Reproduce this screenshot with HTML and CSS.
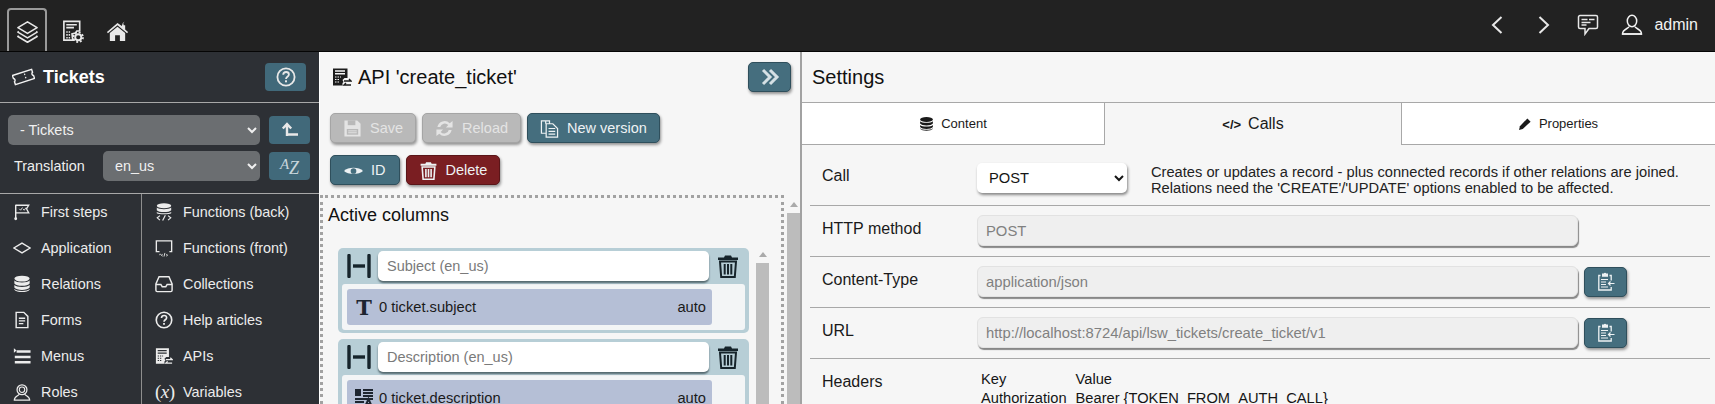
FILE: index.html
```html
<!DOCTYPE html>
<html lang="en">
<head>
<meta charset="utf-8">
<title>API create_ticket</title>
<link rel="stylesheet" href="styles.css">
</head>
<body>
<svg class="defs" width="0" height="0" aria-hidden="true">
  <symbol id="i-db" viewBox="0 0 20 20"><ellipse cx="10" cy="4" rx="8.5" ry="3.2" fill="currentColor"/><path d="M1.5 6.2c2 2.8 15 2.8 17 0v3.2c-2 3.4-15 3.4-17 0zM1.5 11.2c2 2.8 15 2.8 17 0v2.8c-2 3.4-15 3.4-17 0zM1.5 15.6c2 2.8 15 2.8 17 0v.8c-2 3.4-15 3.4-17 0z" fill="currentColor"/></symbol>
  <symbol id="i-help" viewBox="0 0 20 20"><circle cx="10" cy="10" r="8.6" fill="none" stroke="currentColor" stroke-width="1.8"/><path d="M7.2 7.8C7.3 5.9 8.5 5 10.1 5c1.700 0 2.800 1 2.800 2.400 0 2.300-2.900 2.300-2.900 4.500" fill="none" stroke="currentColor" stroke-width="1.800"/><rect x="9" y="13.300" width="2" height="2" fill="currentColor"/></symbol>
  <symbol id="i-api" viewBox="0 0 20 20"><path d="M1 1.500h14.500v9.500h-3l-2 2 1 2 -1 1v2.500H1z" fill="currentColor"/><path d="M3 4h10M3 6.800h10" stroke="var(--icon-bg,#2d3035)" stroke-width="1.500"/><path d="M3 10h6M3 12.500h5M3 15h5" stroke="var(--icon-bg,#2d3035)" stroke-width="1.200" stroke-dasharray="1.500 1"/><path d="M12 13.500h7l-2-2M19 17.500h-7l2-2" transform="translate(0 .5)" fill="none" stroke="currentColor" stroke-width="1.400"/></symbol>
  <symbol id="i-trash" viewBox="0 0 22 24"><path d="M8 1.500h6l1 2h6v2.500H1V3.500h6z" fill="currentColor"/><path d="M3 7.500h16l-1.200 15.500H4.200zM7.700 10v10.500M11 10v10.500M14.300 10v10.500" fill="none" stroke="currentColor" stroke-width="2"/></symbol>
  <symbol id="i-handle" viewBox="0 0 24 24"><path d="M2 1.500v21M22 1.500v21" stroke="currentColor" stroke-width="3.400" stroke-linecap="round"/><path d="M6 12h12" stroke="currentColor" stroke-width="3.400"/></symbol>
  <symbol id="i-clip" viewBox="0 0 20 20"><path d="M13.500 3.500h1.700v5M15.200 15v3H2.800V3.500h1.700" fill="none" stroke="currentColor" stroke-width="1.300"/><path d="M6 1.500h1.800a1.300 1.300 0 0 1 2.400 0H12v3.200H6z" fill="currentColor"/><path d="M5 7.500h7M5 10h5M5 12.500h5M5 15h7M18.500 11.500h-6M14.500 9.500l-2 2 2 2" fill="none" stroke="currentColor" stroke-width="1.200"/></symbol>
</svg>

<header class="topbar">
  <nav class="topbar-left">
    <a class="top-tab top-tab-active"><svg class="ico-24" viewBox="0 0 24 24" fill="none" stroke="currentColor" stroke-width="1.700" stroke-linejoin="round"><path d="M12 2l10 6-10 6-10-6z"/><path d="M3 12l-1 .7 10 6 10-6-1-.7M3 16.500l-1 .7 10 6 10-6-1-.7"/></svg></a>
    <a class="top-tab"><svg class="ico-24" viewBox="0 0 24 24"><path d="M3 1.500h16.500v10h-3l-1.500 2-3.500 1 .5 4.500 1 2H3z" fill="none" stroke="currentColor" stroke-width="1.700"/><path d="M5.500 5h11M5.500 8h8" stroke="currentColor" stroke-width="1.700"/><path d="M5.500 12.500h5M5.500 15.500h5M5.500 18.500h5" stroke="currentColor" stroke-width="1.700" stroke-dasharray="1.500 1"/><circle cx="18" cy="18" r="3.200" fill="none" stroke="currentColor" stroke-width="2"/><circle cx="18" cy="18" r="5" fill="none" stroke="currentColor" stroke-width="1.800" stroke-dasharray="2 1.900"/></svg></a>
    <a class="top-tab"><svg class="ico-24" viewBox="0 0 24 24"><path d="M12 3L1 12.500l1 1.200L12 5.500l10 8.200 1-1.200-3-2.600V5.500h-1.500L18 3.500l1.500-2-2 1.500-1 3.200z" fill="currentColor"/><path d="M12 7l-8 6.500V22h5.500v-6h5v6H20v-8.500z" fill="currentColor"/></svg></a>
  </nav>
  <div class="topbar-right">
    <svg class="ico-nav" viewBox="0 0 14 20"><path d="M11.500 2L3 10l8.500 8" fill="none" stroke="currentColor" stroke-width="2"/></svg>
    <svg class="ico-nav ico-nav-next" viewBox="0 0 14 20"><path d="M2.500 2L11 10l-8.500 8" fill="none" stroke="currentColor" stroke-width="2"/></svg>
    <svg class="ico-chat" viewBox="0 0 22 22"><path d="M3 1.500h16a1.500 1.500 0 0 1 1.500 1.500v10a1.500 1.500 0 0 1-1.500 1.500h-7l-4 5.500v-5.500H3A1.500 1.500 0 0 1 1.500 13V3A1.500 1.500 0 0 1 3 1.500z" fill="none" stroke="currentColor" stroke-width="1.500"/><path d="M4.500 5.500h6M12 5.500h5.500M4.500 8.500h9M4.500 11h5" stroke="currentColor" stroke-width="1.500"/></svg>
    <div class="user">
      <svg class="ico-user" viewBox="0 0 22 22"><ellipse cx="11" cy="7" rx="4.700" ry="5.700" fill="none" stroke="currentColor" stroke-width="1.500"/><path d="M8 12.500c0 2-6.500 2.500-6.500 7.500h19c0-5-6.500-5.500-6.500-7.500" fill="none" stroke="currentColor" stroke-width="1.500"/><path d="M1 20h20" stroke="currentColor" stroke-width="1.500"/></svg>
      <span>admin</span>
    </div>
  </div>
</header>

<main class="layout">
  <aside class="sidebar">
    <div class="side-head">
      <svg class="ico-ticket" viewBox="0 0 24 18"><g transform="rotate(-18 12 9)"><path d="M1.500 4h21v3.200a2 2 0 0 0 0 3.600V14h-21v-3.200a2 2 0 0 0 0-3.600z" fill="none" stroke="currentColor" stroke-width="1.500"/><path d="M14 6v1.500M14 9.500v1.500" stroke="currentColor" stroke-width="1.300"/></g></svg>
      <h1 class="side-title">Tickets</h1>
      <button class="side-btn side-btn-help"><svg class="ico-20"><use href="#i-help"/></svg></button>
    </div>
    <div class="side-filters">
      <div class="filter-row">
        <select class="side-select side-select-full"><option>- Tickets</option></select>
        <button class="side-btn"><svg class="ico-20" viewBox="0 0 20 20"><path d="M7 16V4.500M2.800 8.500L7 4l4.200 4.500M7 14.500h11" fill="none" stroke="currentColor" stroke-width="2.400"/></svg></button>
      </div>
      <div class="filter-row">
        <label class="filter-label">Translation</label>
        <select class="side-select side-select-lang"><option>en_us</option></select>
        <button class="side-btn side-btn-az"><span class="az-a">A</span><span class="az-z">Z</span></button>
      </div>
    </div>
    <nav class="side-menu">
      <a class="menu-item"><svg class="ico-menu" viewBox="0 0 20 20"><path d="M3 2v15" stroke="currentColor" stroke-width="1.600"/><circle cx="3" cy="17.500" r="1.600" fill="currentColor"/><path d="M3 2.500h14.500l-2.500 4 2.500 4.500H3" fill="none" stroke="currentColor" stroke-width="1.400"/><path d="M7 6.500l1.500 1.500 2-3M11 6.500l1.500 1.500 2-3" fill="none" stroke="currentColor" stroke-width="1"/></svg><span>First steps</span></a>
      <a class="menu-item"><svg class="ico-menu" viewBox="0 0 20 20"><ellipse cx="10" cy="3" rx="8" ry="2.800" fill="currentColor"/><path d="M2 5c2 2.500 14 2.500 16 0v3c-2 2.800-14 2.800-16 0zM2 10c1.500 1.800 14.500 1.800 16 0v1.500c-2 1.500-14 1.500-16 0z" fill="currentColor"/><path d="M5.500 14l-3 2.500 3 2.500M14.500 14l3 2.500-3 2.500M11.500 13.500l-3 6M2 17.500" fill="none" stroke="currentColor" stroke-width="1.300"/></svg><span>Functions (back)</span></a>
      <a class="menu-item"><svg class="ico-menu" viewBox="0 0 20 20"><path d="M10 4.500l9 5.500-9 5.500L1 10z" fill="none" stroke="currentColor" stroke-width="1.500"/></svg><span>Application</span></a>
      <a class="menu-item"><svg class="ico-menu" viewBox="0 0 20 20"><path d="M1.500 2h17v12h-17zM5 17.500h10" fill="none" stroke="currentColor" stroke-width="1.500"/><rect x="5" y="13" width="11" height="6" fill="#2d3035"/><path d="M5 17h1.500M8.500 17l-1.500 1 1.500 1M11 15.500l-1 4M12.500 17l1.500 1-1.500 1" fill="none" stroke="currentColor" stroke-width="1"/></svg><span>Functions (front)</span></a>
      <a class="menu-item"><svg class="ico-menu"><use href="#i-db"/></svg><span>Relations</span></a>
      <a class="menu-item"><svg class="ico-menu" viewBox="0 0 20 20"><path d="M4.500 2h11l3.500 8v7a1.500 1.500 0 0 1-1.500 1.500h-15A1.500 1.500 0 0 1 1 17v-7z" fill="none" stroke="currentColor" stroke-width="1.600"/><path d="M1 10.500h5.500l1.500 2.500h4l1.500-2.500H19" fill="none" stroke="currentColor" stroke-width="1.600"/></svg><span>Collections</span></a>
      <a class="menu-item"><svg class="ico-menu" viewBox="0 0 20 20"><path d="M3.500 1.500h8.500l4.500 4.500v12.500h-13z" fill="none" stroke="currentColor" stroke-width="1.600"/><path d="M6.500 8h7M6.500 11h7M6.500 14h5" stroke="currentColor" stroke-width="1.500"/></svg><span>Forms</span></a>
      <a class="menu-item"><svg class="ico-menu"><use href="#i-help"/></svg><span>Help articles</span></a>
      <a class="menu-item"><svg class="ico-menu" viewBox="0 0 20 20"><path d="M1 1.500l3 2.500-3 2.500z" fill="currentColor"/><path d="M4 5h15.500M2 11h17.500M2 17h17.500" stroke="currentColor" stroke-width="2.800"/></svg><span>Menus</span></a>
      <a class="menu-item"><svg class="ico-menu ico-api-side"><use href="#i-api"/></svg><span>APIs</span></a>
      <a class="menu-item"><svg class="ico-menu" viewBox="0 0 20 20"><circle cx="10" cy="7.500" r="5.500" fill="none" stroke="currentColor" stroke-width="1.400"/><circle cx="10" cy="7.500" r="3" fill="none" stroke="currentColor" stroke-width="1.200"/><path d="M7 12.500c-1 2-5.500 2-5.500 6.500h17c0-4.500-4.500-4.500-5.500-6.500" fill="none" stroke="currentColor" stroke-width="1.400"/></svg><span>Roles</span></a>
      <a class="menu-item"><span class="var-glyph">(<i>x</i>)</span><span>Variables</span></a>
    </nav>
  </aside>

  <section class="center">
    <div class="center-head">
      <div class="title-row">
        <svg class="ico-title"><use href="#i-api"/></svg>
        <h2 class="title">API 'create_ticket'</h2>
        <button class="btn btn-expand"><svg class="ico-expand" viewBox="0 0 20 20"><path d="M3 3l7 7-7 7M10 3l7 7-7 7" fill="none" stroke="currentColor" stroke-width="3"/></svg></button>
      </div>
      <div class="btn-row">
        <button class="btn btn-off"><svg class="ico-btn" viewBox="0 0 20 20"><path d="M1.500 1.500H15l3.500 3.500v13.500h-17z" fill="currentColor"/><rect x="5" y="1.500" width="8" height="5" fill="#b9b9b9"/><rect x="4" y="10.500" width="12" height="6" fill="#b9b9b9"/><path d="M5.500 12.500h9M5.500 14.500h9" stroke="currentColor"/></svg>Save</button>
        <button class="btn btn-off"><svg class="ico-btn" viewBox="0 0 20 20"><path d="M2.500 8.500A7.700 7.700 0 0 1 15.500 4.500L18.500 2v7h-7l2.500-2.700A5 5 0 0 0 5.500 8.500zM17.500 11.500A7.700 7.700 0 0 1 4.500 15.500L1.500 18v-7h7L6 13.700a5 5 0 0 0 8.500-2.200z" fill="currentColor"/></svg>Reload</button>
        <button class="btn"><svg class="ico-btn" viewBox="0 0 20 20"><path d="M6 5V2H1.500v13H6M6 2h4v3M6.500 5h7l5 5v9h-12zM9 10h7M9 13h7M9 16h7" fill="none" stroke="currentColor" stroke-width="1.300"/></svg>New version</button>
      </div>
      <div class="btn-row">
        <button class="btn btn-id"><svg class="ico-btn" viewBox="0 0 20 20"><path d="M0 10.500C4 6 16 6 20 10.500 16 14.500 4 14.500 0 10.500z" fill="currentColor"/><circle cx="10" cy="10.500" r="3" fill="#456e7e"/></svg>ID</button>
        <button class="btn btn-danger"><svg class="ico-btn"><use href="#i-trash"/></svg>Delete</button>
      </div>
    </div>
    <div class="builder">
      <div class="dotted">
        <h3 class="builder-title">Active columns</h3>
        <div class="builder-body">
          <div class="cards">
            <article class="card">
              <div class="card-head">
                <svg class="ico-handle"><use href="#i-handle"/></svg>
                <input class="card-input" placeholder="Subject (en_us)">
                <svg class="ico-trash"><use href="#i-trash"/></svg>
              </div>
              <div class="card-panel">
                <div class="card-bar">
                  <span class="t-glyph">T</span>
                  <span class="bar-name">0 ticket.subject</span>
                  <span class="bar-auto">auto</span>
                </div>
              </div>
            </article>
            <article class="card">
              <div class="card-head">
                <svg class="ico-handle"><use href="#i-handle"/></svg>
                <input class="card-input" placeholder="Description (en_us)">
                <svg class="ico-trash"><use href="#i-trash"/></svg>
              </div>
              <div class="card-panel">
                <div class="card-bar">
                  <svg class="ico-rich" viewBox="0 0 20 20"><path d="M1 1h6v7H1z" fill="currentColor"/><path d="M9 2h10M9 5h10M9 8h10M1 11h18M1 14h9M1 17h8" stroke="currentColor" stroke-width="1.800"/><path d="M11 19l3.500-8 3.500 8M12.500 16h4" fill="none" stroke="currentColor" stroke-width="2"/></svg>
                  <span class="bar-name">0 ticket.description</span>
                  <span class="bar-auto">auto</span>
                </div>
              </div>
            </article>
          </div>
          <div class="scrollbar scrollbar-inner"><span class="sb-arrow"></span><span class="sb-thumb"></span></div>
        </div>
      </div>
      <div class="scrollbar scrollbar-outer"><span class="sb-arrow"></span><span class="sb-thumb"></span></div>
    </div>
  </section>

  <section class="settings">
    <h2 class="settings-title">Settings</h2>
    <div class="tabs">
      <a class="tab tab-a"><svg class="ico-tab"><use href="#i-db"/></svg>Content</a>
      <a class="tab tab-b tab-active"><b class="code-glyph">&lt;/&gt;</b>Calls</a>
      <a class="tab tab-c"><svg class="ico-pen" viewBox="0 0 14 14"><path d="M0 14l1-4 8-8.500 3.500 3.500L4 13z" fill="currentColor"/></svg>Properties</a>
    </div>
    <div class="form-row form-row-first">
      <span class="form-label">Call</span>
      <select class="call-select"><option>POST</option></select>
      <p class="call-desc">Creates or updates a record - plus connected records if other relations are joined.<br>Relations need the 'CREATE'/'UPDATE' options enabled to be affected.</p>
    </div>
    <div class="form-row">
      <span class="form-label">HTTP method</span>
      <input class="form-input" disabled value="POST">
    </div>
    <div class="form-row">
      <span class="form-label">Content-Type</span>
      <input class="form-input" disabled value="application/json">
      <button class="btn btn-copy"><svg class="ico-clip"><use href="#i-clip"/></svg></button>
    </div>
    <div class="form-row">
      <span class="form-label">URL</span>
      <input class="form-input" disabled value="http://localhost:8724/api/lsw_tickets/create_ticket/v1">
      <button class="btn btn-copy"><svg class="ico-clip"><use href="#i-clip"/></svg></button>
    </div>
    <div class="form-row">
      <span class="form-label">Headers</span>
      <table class="headers">
        <tr><td>Key</td><td>Value</td></tr>
        <tr><td>Authorization</td><td>Bearer {TOKEN_FROM_AUTH_CALL}</td></tr>
      </table>
    </div>
  </section>
</main>
</body>
</html>
```

FILE: styles.css
```css
* { box-sizing: border-box; }
html, body { margin: 0; height: 404px; overflow: hidden; }
body { font-family: "Liberation Sans", Arial, sans-serif; background: #f6f6f6; color: #151515; }
h1, h2, h3, p { margin: 0; font-weight: normal; }
button { font-family: inherit; cursor: pointer; }
svg { display: block; flex: none; }
.defs { position: absolute; }

.topbar { height: 52px; background: #222222; border-bottom: 1px solid #050505; color: #e8e8e8; display: flex; justify-content: space-between; }
.topbar-left { display: flex; padding: 8px 0 0 7px; gap: 5px; }
.top-tab { width: 40px; height: 43px; display: flex; align-items: center; justify-content: center; padding-top: 1px; border: 2px solid transparent; border-bottom: 0; }
.top-tab-active { border-color: #9a9a9a; border-radius: 4px 4px 0 0; }
.ico-24 { width: 23px; height: 23px; }
.topbar-right { display: flex; align-items: center; padding: 0 17px 2px 0; }
.ico-nav { width: 14px; height: 20px; margin-right: 33px; }
.ico-nav-next { margin-right: 26px; }
.ico-chat { width: 22px; height: 22px; margin-right: 22px; }
.user { display: flex; align-items: center; gap: 11px; font-size: 16px; color: #f2f2f2; }
.ico-user { width: 22px; height: 22px; }

.layout { display: flex; height: 352px; }

.sidebar { width: 320px; flex: none; background: #2d3035; color: #ececec; border-right: 1px solid #ffffff; overflow: hidden; }
.side-head { height: 51px; border-bottom: 1px solid #a8a8a8; display: flex; align-items: center; padding: 0 13px 0 12px; }
.ico-ticket { width: 23px; height: 18px; margin-right: 8px; color: #f2f2f2; }
.side-title { font-size: 18px; font-weight: bold; color: #fff; flex: 1; }
.side-btn { width: 41px; height: 28px; border: 0; border-radius: 4px; background: #41697a; color: #e8e8e8; display: flex; align-items: center; justify-content: center; padding: 0; }
.ico-20 { width: 20px; height: 20px; }
.side-filters { height: 91px; border-bottom: 1px solid #a8a8a8; padding: 12px 9px 0 8px; display: flex; flex-direction: column; gap: 6px; }
.filter-row { display: flex; align-items: center; height: 30px; }
.filter-label { font-size: 14.400px; width: 95px; padding-left: 6px; color: #eee; }
.side-select { height: 30px; border: 0; border-radius: 5px; background: #6b6e71; color: #f0f0f0; font-family: inherit; font-size: 14.400px; padding: 0 8px; margin-right: 9px; }
.side-select-full { width: 252px; }
.side-select-lang { width: 157px; }
.side-btn-az { font-family: "Liberation Serif", serif; font-style: italic; font-size: 15px; color: #c8d6dc; align-items: center; }
.az-a { position: relative; top: -2px; }
.az-z { font-size: 18px; position: relative; top: 2px; }

.side-menu { display: grid; grid-template-columns: 142px 1fr; grid-auto-rows: 36px; }
.menu-item { display: flex; align-items: center; gap: 8px; padding-left: 13px; font-size: 14.400px; color: #ececec; }
.menu-item:nth-child(odd) { border-right: 1px solid #8e8e8e; }
.ico-menu { width: 18px; height: 18px; margin-right: 2px; }
.ico-api-side { --icon-bg: #2d3035; }
.var-glyph { width: 20px; font-family: "Liberation Serif", serif; font-size: 19px; white-space: nowrap; letter-spacing: -.5px; }

.center { width: 482px; flex: none; border-right: 2px solid #a2a2a2; display: flex; flex-direction: column; }
.center-head { height: 143px; padding: 10px 9px 0 10px; display: flex; flex-direction: column; gap: 12px; }
.title-row { display: flex; align-items: center; height: 30px; margin-bottom: 9px; padding-left: 2px; }
.ico-title { width: 20px; height: 20px; margin-right: 6px; color: #1c1c1c; --icon-bg: #f6f6f6; }
.title { font-size: 20px; flex: 1; color: #111; }
.btn { height: 30px; border: 1px solid #2f4f5c; border-radius: 5px; background: #456e7e; color: #eef2f4; font-size: 14.500px; display: inline-flex; align-items: center; gap: 8px; padding: 0 12px; box-shadow: 1px 2px 3px rgba(0,0,0,.4); white-space: nowrap; }
.btn-id { padding: 0 13px; }
.btn-expand { width: 43px; padding: 0; justify-content: center; }
.ico-expand { width: 20px; height: 20px; color: #d5e0e4; }
.btn-row { display: flex; gap: 6px; }
.btn-off { background: #b9b9b9; border-color: #a5a5a5; color: #e4e4e4; }
.btn-danger { background: #7a1e22; border-color: #5a1518; }
.ico-btn { width: 19px; height: 19px; }

.builder { flex: 1; min-height: 0; display: flex; overflow: hidden; }
.dotted { width: 464px; border: 3px dotted #a2a2a2; border-bottom: 0; padding: 7px 0 0 5px; }
.builder-title { font-size: 18px; line-height: 20px; color: #111; margin-bottom: 23px; }
.builder-body { display: flex; gap: 7px; padding-left: 10px; }
.cards { width: 411px; display: flex; flex-direction: column; gap: 6px; }
.card { background: #b7ced6; border-radius: 5px; padding: 0 4px 3px; }
.card-head { height: 36px; display: flex; align-items: flex-start; padding: 3px 6px 0 5px; }
.ico-handle { width: 24px; height: 24px; margin: 3px 7px 0 0; color: #16242b; }
.card-input { width: 332px; height: 30px; border: 0; border-radius: 5px; background: #fff; font-family: inherit; font-size: 14.500px; padding: 0 9px; box-shadow: 0 2px 2px rgba(50,70,75,.75); }
.card-input::placeholder { color: #7a7a7a; }
.ico-trash { width: 22px; height: 24px; margin: 3px 0 0 8px; color: #16242b; }
.card-panel { background: #f3f5f6; padding: 5px 33px 5px 5px; border-radius: 3px; }
.card-bar { height: 36px; border-radius: 3px; background: #b5bfd6; display: flex; align-items: center; padding: 0 6px 0 9px; font-size: 14.700px; color: #1a1a1a; }
.t-glyph { width: 16px; margin-right: 7px; font-family: "DejaVu Serif", "Liberation Serif", serif; font-weight: bold; font-size: 21px; text-align: center; color: #1e2530; }
.ico-rich { width: 20px; height: 20px; margin-right: 5px; margin-left: -2px; color: #1e2530; }
.bar-name { flex: 1; }

.scrollbar { width: 13px; flex: none; display: flex; flex-direction: column; align-items: center; }
.scrollbar-outer { margin: 3px 0 0 3px; }
.sb-arrow { width: 0; height: 0; border: 4px solid transparent; border-top: 0; border-bottom: 5px solid #aaaaaa; margin: 4px 0 6px; }
.sb-thumb { width: 13px; flex: 1; height: 300px; background: #bcbcbc; }

.settings { flex: 1; min-width: 0; }
.settings-title { height: 51px; border-bottom: 1px solid #a8a8a8; font-size: 20px; line-height: 50px; padding-left: 10px; color: #111; }
.tabs { display: flex; height: 42px; }
.tab { display: flex; align-items: center; justify-content: center; gap: 7px; font-size: 13px; color: #1a1a1a; border-bottom: 1px solid #a8a8a8; background: #fff; }
.tab-a { width: 303px; border-right: 1px solid #a8a8a8; }
.tab-b { width: 296px; }
.tab-c { flex: 1; border-left: 1px solid #a8a8a8; }
.tab-active { background: transparent; border-bottom: 0; font-size: 16px; }
.code-glyph { font-size: 13px; }
.ico-tab { width: 15px; height: 16px; color: #1a1a1a; }
.ico-pen { width: 13px; height: 13px; color: #1a1a1a; }

.form-row { margin: 0 5px 0 8px; height: 51px; border-bottom: 1px solid #a8a8a8; display: flex; align-items: flex-start; padding: 9px 0 0 12px; }
.form-row-first { height: 61px; padding-top: 18px; }
.form-label { width: 155px; flex: none; font-size: 16px; line-height: 18px; padding-top: 5px; color: #1a1a1a; }
.form-row-first .form-label { padding-top: 4px; }
.call-select { width: 150px; height: 30px; border: 0; border-radius: 5px; background: #fff; font-family: inherit; font-size: 14.700px; padding: 0 8px; margin-right: 24px; box-shadow: 1px 2px 3px rgba(0,0,0,.45); color: #151515; }
.call-desc { font-size: 14.670px; line-height: 16px; padding-top: 1px; white-space: nowrap; color: #222; }
.form-input { width: 601px; height: 31px; border: 1px solid #e2e2e2; border-radius: 6px; background: #efefef; font-family: inherit; font-size: 14.800px; color: #808080; padding: 0 8px; box-shadow: 1px 2px 1px rgba(0,0,0,.45); }
.btn-copy { width: 43px; margin: 1px 0 0 6px; padding: 0; justify-content: center; }
.ico-clip { width: 20px; height: 20px; }
.headers { border-collapse: collapse; font-size: 14.670px; line-height: 19px; margin: 2px 0 0 4px; }
.headers td { padding: 0 9px 0 0; }
.form-row:last-child { border-bottom: 0; }
```
